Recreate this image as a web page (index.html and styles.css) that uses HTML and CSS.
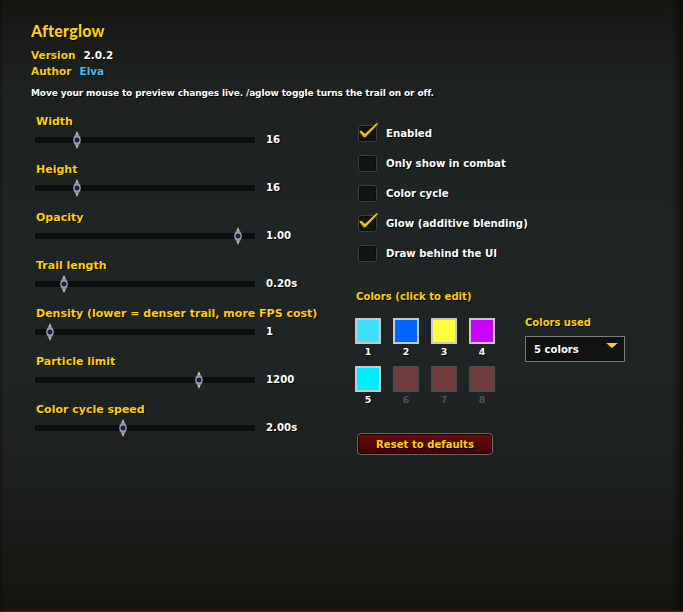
FILE: index.html
```html
<!DOCTYPE html>
<html lang="en">
<head>
<meta charset="utf-8">
<title>Afterglow</title>
<link rel="stylesheet" href="styles.css">
</head>
<body>
<div class="panel">
  <h1 class="title">Afterglow</h1>
  <div class="meta"><span class="key">Version</span><span class="val">2.0.2</span></div>
  <div class="meta"><span class="key">Author</span><span class="author">Elva</span></div>
  <p class="desc">Move your mouse to preview changes live. /aglow toggle turns the trail on or off.</p>

  <div class="cols">
    <div class="sliders">
      <div class="slider">
        <div class="s-label">Width</div>
        <div class="s-row">
          <div class="track"><span class="thumb" style="left:42px"><svg width="10" height="20" viewBox="0 0 10 20"><path d="M5 0.5 L6.6 4 L8.6 7 L8.6 13 L6.6 16 L5 19.5 L3.4 16 L1.4 13 L1.4 7 L3.4 4 Z" fill="#8e8e8e" stroke="#2a2a2a" stroke-width="0.7"/><path d="M5 1.5 L6 4.5 L4 4.5 Z M5 18.5 L6 15.5 L4 15.5 Z" fill="#e0e0e0"/><circle cx="5" cy="10" r="3.2" fill="#1b2040" stroke="#c9cbe0" stroke-width="0.9"/></svg></span></div>
          <span class="s-val">16</span>
        </div>
      </div>
      <div class="slider">
        <div class="s-label">Height</div>
        <div class="s-row">
          <div class="track"><span class="thumb" style="left:42px"><svg width="10" height="20" viewBox="0 0 10 20"><path d="M5 0.5 L6.6 4 L8.6 7 L8.6 13 L6.6 16 L5 19.5 L3.4 16 L1.4 13 L1.4 7 L3.4 4 Z" fill="#8e8e8e" stroke="#2a2a2a" stroke-width="0.7"/><path d="M5 1.5 L6 4.5 L4 4.5 Z M5 18.5 L6 15.5 L4 15.5 Z" fill="#e0e0e0"/><circle cx="5" cy="10" r="3.2" fill="#1b2040" stroke="#c9cbe0" stroke-width="0.9"/></svg></span></div>
          <span class="s-val">16</span>
        </div>
      </div>
      <div class="slider">
        <div class="s-label">Opacity</div>
        <div class="s-row">
          <div class="track"><span class="thumb" style="left:203px"><svg width="10" height="20" viewBox="0 0 10 20"><path d="M5 0.5 L6.6 4 L8.6 7 L8.6 13 L6.6 16 L5 19.5 L3.4 16 L1.4 13 L1.4 7 L3.4 4 Z" fill="#8e8e8e" stroke="#2a2a2a" stroke-width="0.7"/><path d="M5 1.5 L6 4.5 L4 4.5 Z M5 18.5 L6 15.5 L4 15.5 Z" fill="#e0e0e0"/><circle cx="5" cy="10" r="3.2" fill="#1b2040" stroke="#c9cbe0" stroke-width="0.9"/></svg></span></div>
          <span class="s-val">1.00</span>
        </div>
      </div>
      <div class="slider">
        <div class="s-label">Trail length</div>
        <div class="s-row">
          <div class="track"><span class="thumb" style="left:29px"><svg width="10" height="20" viewBox="0 0 10 20"><path d="M5 0.5 L6.6 4 L8.6 7 L8.6 13 L6.6 16 L5 19.5 L3.4 16 L1.4 13 L1.4 7 L3.4 4 Z" fill="#8e8e8e" stroke="#2a2a2a" stroke-width="0.7"/><path d="M5 1.5 L6 4.5 L4 4.5 Z M5 18.5 L6 15.5 L4 15.5 Z" fill="#e0e0e0"/><circle cx="5" cy="10" r="3.2" fill="#1b2040" stroke="#c9cbe0" stroke-width="0.9"/></svg></span></div>
          <span class="s-val">0.20s</span>
        </div>
      </div>
      <div class="slider">
        <div class="s-label">Density (lower = denser trail, more FPS cost)</div>
        <div class="s-row">
          <div class="track"><span class="thumb" style="left:15px"><svg width="10" height="20" viewBox="0 0 10 20"><path d="M5 0.5 L6.6 4 L8.6 7 L8.6 13 L6.6 16 L5 19.5 L3.4 16 L1.4 13 L1.4 7 L3.4 4 Z" fill="#8e8e8e" stroke="#2a2a2a" stroke-width="0.7"/><path d="M5 1.5 L6 4.5 L4 4.5 Z M5 18.5 L6 15.5 L4 15.5 Z" fill="#e0e0e0"/><circle cx="5" cy="10" r="3.2" fill="#1b2040" stroke="#c9cbe0" stroke-width="0.9"/></svg></span></div>
          <span class="s-val">1</span>
        </div>
      </div>
      <div class="slider">
        <div class="s-label">Particle limit</div>
        <div class="s-row">
          <div class="track"><span class="thumb" style="left:164px"><svg width="10" height="20" viewBox="0 0 10 20"><path d="M5 0.5 L6.6 4 L8.6 7 L8.6 13 L6.6 16 L5 19.5 L3.4 16 L1.4 13 L1.4 7 L3.4 4 Z" fill="#8e8e8e" stroke="#2a2a2a" stroke-width="0.7"/><path d="M5 1.5 L6 4.5 L4 4.5 Z M5 18.5 L6 15.5 L4 15.5 Z" fill="#e0e0e0"/><circle cx="5" cy="10" r="3.2" fill="#1b2040" stroke="#c9cbe0" stroke-width="0.9"/></svg></span></div>
          <span class="s-val">1200</span>
        </div>
      </div>
      <div class="slider">
        <div class="s-label">Color cycle speed</div>
        <div class="s-row">
          <div class="track"><span class="thumb" style="left:88px"><svg width="10" height="20" viewBox="0 0 10 20"><path d="M5 0.5 L6.6 4 L8.6 7 L8.6 13 L6.6 16 L5 19.5 L3.4 16 L1.4 13 L1.4 7 L3.4 4 Z" fill="#8e8e8e" stroke="#2a2a2a" stroke-width="0.7"/><path d="M5 1.5 L6 4.5 L4 4.5 Z M5 18.5 L6 15.5 L4 15.5 Z" fill="#e0e0e0"/><circle cx="5" cy="10" r="3.2" fill="#1b2040" stroke="#c9cbe0" stroke-width="0.9"/></svg></span></div>
          <span class="s-val">2.00s</span>
        </div>
      </div>
    </div>

    <div class="right">
      <div class="checks">
        <div class="check"><span class="box"><svg class="tick" width="22" height="18" viewBox="0 0 22 18"><path d="M2 9 L7 13 L19 1.5 L20.5 3 L7.5 16.5 L5.5 16.5 L1 11 Z" fill="#e6b800" stroke="#3a2a00" stroke-width="1"/><path d="M3 10 L7 13.5 L18.5 3" fill="none" stroke="#fff27a" stroke-width="0.8"/></svg></span><span class="c-label">Enabled</span></div>
        <div class="check"><span class="box"></span><span class="c-label">Only show in combat</span></div>
        <div class="check"><span class="box"></span><span class="c-label">Color cycle</span></div>
        <div class="check"><span class="box"><svg class="tick" width="22" height="18" viewBox="0 0 22 18"><path d="M2 9 L7 13 L19 1.5 L20.5 3 L7.5 16.5 L5.5 16.5 L1 11 Z" fill="#e6b800" stroke="#3a2a00" stroke-width="1"/><path d="M3 10 L7 13.5 L18.5 3" fill="none" stroke="#fff27a" stroke-width="0.8"/></svg></span><span class="c-label">Glow (additive blending)</span></div>
        <div class="check"><span class="box"></span><span class="c-label">Draw behind the UI</span></div>
      </div>

      <div class="colors-title">Colors (click to edit)</div>
      <div class="colors-area">
        <div class="swatches">
          <div class="sw"><span class="chip" style="background:#3ee0ff"></span><span class="num">1</span></div>
          <div class="sw"><span class="chip" style="background:#0066ff"></span><span class="num">2</span></div>
          <div class="sw"><span class="chip" style="background:#ffff3c"></span><span class="num">3</span></div>
          <div class="sw"><span class="chip" style="background:#cc00ff"></span><span class="num">4</span></div>
          <div class="sw"><span class="chip" style="background:#00eeff"></span><span class="num">5</span></div>
          <div class="sw off"><span class="chip"></span><span class="num">6</span></div>
          <div class="sw off"><span class="chip"></span><span class="num">7</span></div>
          <div class="sw off"><span class="chip"></span><span class="num">8</span></div>
        </div>
        <div class="used">
          <div class="used-label">Colors used</div>
          <div class="dropdown"><span class="dd-text">5 colors</span><span class="dd-arrow"></span></div>
        </div>
      </div>

      <button class="reset">Reset to defaults</button>
    </div>
  </div>
</div>
</body>
</html>
```

FILE: styles.css
```css
* { box-sizing: border-box; }
html, body { margin: 0; padding: 0; }
body {
  width: 683px;
  height: 612px;
  overflow: hidden;
  background: #16150f;
  font-family: "DejaVu Sans", "Liberation Sans", sans-serif;
  font-weight: 700;
}
.panel {
  width: 683px;
  height: 612px;
  padding: 21px 0 0 31px;
  background:
    linear-gradient(to left, rgba(8,7,4,0.85) 0px, rgba(8,7,4,0.35) 6px, rgba(8,7,4,0) 12px),
    linear-gradient(to right, rgba(8,7,4,0.4) 0px, rgba(8,7,4,0) 4px),
    linear-gradient(to bottom, #141410 0%, #191b18 6%, #1d2220 14%, #1f2524 35%, #1f2524 62%, #1c201e 78%, #181815 90%, #14130e 100%);
  border-bottom: 1px solid #3a3222;
  text-shadow: 1px 1px 0 #000;
}
.title {
  margin: 0;
  font-family: Lato, "DejaVu Sans", sans-serif;
  font-size: 16px;
  line-height: 20px;
  color: #ffd100;
  font-weight: 900;
  letter-spacing: 0.2px;
}
.meta {
  margin-top: 6px;
  height: 16px;
  line-height: 16px;
  font-size: 10.5px;
  display: flex;
  gap: 8px;
}
.meta + .meta { margin-top: 0; }
.key { color: #ffd100; }
.val { color: #fff; }
.author { color: #45bdf0; }
.desc {
  margin: 7px 0 0 0;
  font-size: 9px;
  letter-spacing: -0.12px;
  line-height: 14px;
  color: #fff;
}
.cols {
  margin-top: 14px;
  display: flex;
}
.sliders {
  width: 324px;
  display: flex;
  flex-direction: column;
}
.slider {
  height: 48px;
}
.s-label {
  padding-left: 5px;
  font-size: 11px;
  line-height: 14px;
  color: #ffd100;
  white-space: nowrap;
  margin-top: 1px;
  margin-bottom: -1px;
}
.s-row {
  margin-top: 2px;
  height: 20px;
  display: flex;
  align-items: center;
  padding-left: 4px;
}
.track {
  position: relative;
  width: 220px;
  height: 6px;
  background: #0c0e0e;
  border-radius: 1px;
}
.thumb {
  position: absolute;
  top: -7px;
  width: 10px;
  height: 20px;
  margin-left: -5px;
  display: block;
}
.thumb svg { display: block; }
.s-val {
  margin-left: 11px;
  margin-top: -2px;
  font-size: 10.2px;
  color: #fff;
}
.right {
  display: flex;
  flex-direction: column;
  align-items: flex-start;
}
.checks {
  margin-top: 4px;
  display: flex;
  flex-direction: column;
}
.check {
  height: 30px;
  display: flex;
  align-items: center;
  padding-left: 3px;
}
.box {
  position: relative;
  width: 19px;
  height: 17px;
  background: #121313;
  border: 1px solid #3d3f3f;
  border-radius: 3px;
  box-shadow: inset 0 0 2px #000;
}
.tick {
  position: absolute;
  left: -1px;
  top: -5px;
}
.c-label {
  margin-left: 9px;
  font-size: 10.2px;
  color: #fff;
}
.colors-title {
  margin-top: 22px;
  font-size: 10.15px;
  line-height: 14px;
  color: #ffd100;
  padding-left: 1px;
}
.colors-area {
  margin-top: 14px;
  display: flex;
  gap: 30px;
}
.swatches {
  display: grid;
  grid-template-columns: repeat(4, 26px);
  column-gap: 12px;
  row-gap: 8px;
}
.sw {
  display: flex;
  flex-direction: column;
  align-items: center;
}
.chip {
  width: 26px;
  height: 26px;
  border: 2px solid #c9c9c9;
  display: block;
}
.sw.off .chip {
  border-color: #4a4a4a;
  background: #733b3b;
}
.num {
  margin-top: 2px;
  font-size: 9.5px;
  line-height: 12px;
  color: #fff;
}
.sw.off .num { color: #555; text-shadow: none; }
.used {
  margin-top: -2px;
}
.used-label {
  font-size: 10px;
  line-height: 14px;
  color: #ffd100;
}
.dropdown {
  position: relative;
  margin-top: 6px;
  width: 100px;
  height: 26px;
  border: 1px solid #7a7a7a;
  background: #111212;
  display: flex;
  align-items: center;
  padding-left: 8px;
}
.dd-text {
  font-size: 10.1px;
  color: #fff;
}
.dd-arrow {
  position: absolute;
  right: 6px;
  top: 6px;
  width: 0;
  height: 0;
  border-left: 6px solid transparent;
  border-right: 6px solid transparent;
  border-top: 5px solid #ffd100;
  filter: drop-shadow(1px 1px 0 #000);
}
.reset {
  margin-top: 27px;
  margin-left: 2px;
  width: 136px;
  height: 22px;
  padding: 0;
  border: 1px solid #6a6a6a;
  border-radius: 4px;
  background: linear-gradient(to bottom, #6c0c0c 0%, #560606 50%, #430404 100%);
  box-shadow: inset 0 0 0 1px #1a0000;
  color: #ffd100;
  font-family: "DejaVu Sans", "Liberation Sans", sans-serif;
  font-weight: 700;
  font-size: 10.1px;
  text-shadow: 1px 1px 0 #000;
  cursor: pointer;
}
```
